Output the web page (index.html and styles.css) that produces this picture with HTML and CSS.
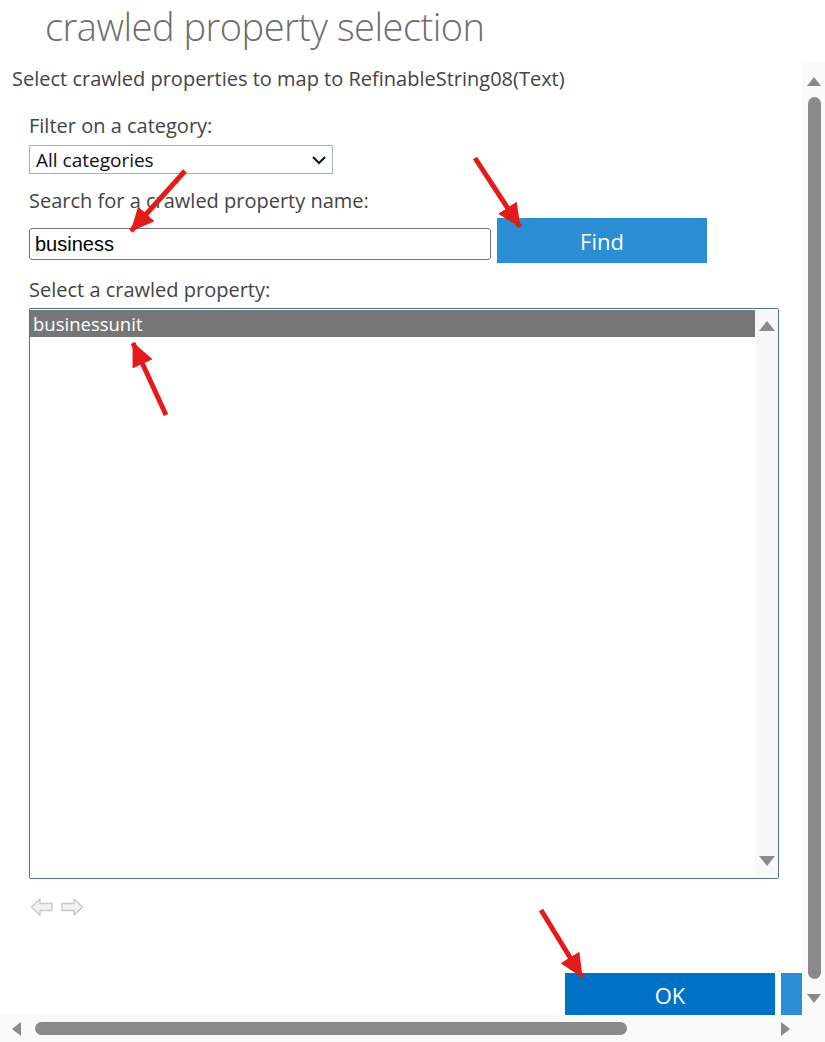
FILE: index.html
```html
<!DOCTYPE html>
<html>
<head>
<meta charset="utf-8">
<link rel="stylesheet" href="styles.css">
</head>
<body>
<div class="window">
  <div class="header">
    <h1 class="title">crawled property selection</h1>
  </div>
  <div class="main">
    <div class="content">
      <p class="desc">Select crawled properties to map to RefinableString08(Text)</p>
      <div class="form">
        <div class="label label-filter">Filter on a category:</div>
        <div class="select">
          <span>All categories</span>
          <svg class="chev" width="16" height="10" viewBox="0 0 16 10"><path d="M2 2 L8 8 L14 2" fill="none" stroke="#111" stroke-width="2"/></svg>
        </div>
        <div class="label label-search">Search for a crawled property name:</div>
        <div class="search-row">
          <div class="input">business</div>
          <div class="btn-find">Find</div>
        </div>
        <div class="label label-select">Select a crawled property:</div>
        <div class="listbox">
          <div class="list">
            <div class="item selected">businessunit</div>
          </div>
          <div class="list-scroll">
            <svg width="18" height="12" viewBox="0 0 18 12"><path d="M1 11 L9 1 L17 11 Z" fill="#8a8a8a"/></svg>
            <svg width="18" height="12" viewBox="0 0 18 12"><path d="M1 1 L9 11 L17 1 Z" fill="#8a8a8a"/></svg>
          </div>
        </div>
        <div class="nav">
          <svg width="24" height="20" viewBox="0 0 24 20"><path d="M1.5 10 L10 2 L10 6.5 L22 6.5 L22 13.5 L10 13.5 L10 18 Z" fill="#f2f2f2" stroke="#c8c8c8" stroke-width="1.3" stroke-linejoin="round"/></svg>
          <svg width="24" height="20" viewBox="0 0 24 20"><path d="M22.5 10 L14 2 L14 6.5 L2 6.5 L2 13.5 L14 13.5 L14 18 Z" fill="#f2f2f2" stroke="#c8c8c8" stroke-width="1.3" stroke-linejoin="round"/></svg>
        </div>
      </div>
      <div class="actions">
        <div class="btn-ok">OK</div>
        <div class="btn-cancel"></div>
      </div>
    </div>
    <div class="vscroll">
      <svg class="vs-up" width="16" height="11" viewBox="0 0 16 11"><path d="M1 10 L8 1 L15 10 Z" fill="#8a8a8a"/></svg>
      <div class="vs-thumb"></div>
      <svg class="vs-down" width="16" height="11" viewBox="0 0 16 11"><path d="M1 1 L8 10 L15 1 Z" fill="#8a8a8a"/></svg>
    </div>
  </div>
  <div class="hscroll">
    <svg class="hs-left" width="11" height="16" viewBox="0 0 11 16"><path d="M10 1 L1 8 L10 15 Z" fill="#8a8a8a"/></svg>
    <div class="hs-track"><div class="hs-thumb"></div></div>
    <svg class="hs-right" width="11" height="16" viewBox="0 0 11 16"><path d="M1 1 L10 8 L1 15 Z" fill="#8a8a8a"/></svg>
    <div class="hs-corner"></div>
  </div>

  <svg class="annot" width="825" height="1042" viewBox="0 0 825 1042">
    <defs>
      <marker id="ah" viewBox="0 0 24 22" markerWidth="24" markerHeight="22" refX="23" refY="11" orient="auto" markerUnits="userSpaceOnUse">
        <path d="M0 0 L24 11 L0 22 Z" fill="#e31b1b"/>
      </marker>
    </defs>
    <line x1="185" y1="171" x2="131" y2="231" stroke="#e31b1b" stroke-width="5" marker-end="url(#ah)"/>
    <line x1="475" y1="158" x2="520" y2="227" stroke="#e31b1b" stroke-width="5" marker-end="url(#ah)"/>
    <line x1="166" y1="415" x2="133" y2="343" stroke="#e31b1b" stroke-width="5" marker-end="url(#ah)"/>
    <line x1="541" y1="910" x2="582" y2="977" stroke="#e31b1b" stroke-width="5" marker-end="url(#ah)"/>
  </svg>
</div>
</body>
</html>
```

FILE: styles.css
```css
* { box-sizing: border-box; }
html, body { margin: 0; padding: 0; background: #fff; }
body { overflow: hidden; font-family: "Open Sans", "Noto Sans", sans-serif; }

.window {
  position: relative;
  width: 825px;
  height: 1042px;
  display: flex;
  flex-direction: column;
  overflow: hidden;
}

.header { height: 63px; flex: none; padding-left: 45px; }
.title {
  margin: 0;
  font-family: "Open Sans", sans-serif;
  font-weight: 300;
  font-size: 38px;
  line-height: 52px;
  color: #6e6e6e;
  letter-spacing: -0.5px;
  white-space: nowrap;
}

.main { flex: 1; display: flex; min-height: 0; }
.content {
  flex: 1;
  min-width: 0;
  overflow: hidden;
  display: flex;
  flex-direction: column;
}

.desc {
  margin: 4px 0 0 12px;
  font-size: 20px;
  line-height: 24px;
  color: #444;
  white-space: nowrap;
}

.form { padding-left: 29px; }
.label {
  font-size: 20px;
  line-height: 22px;
  color: #444;
  white-space: nowrap;
}
.label-filter { margin-top: 24px; }
.label-search { margin-top: 16px; }
.label-select { margin-top: 16px; }

.select {
  margin-top: 8px;
  width: 304px;
  height: 29px;
  border: 1px solid #a6b4c2;
  display: flex;
  align-items: center;
  justify-content: space-between;
  padding: 0 5px 0 6px;
  font-size: 19px;
  color: #111;
}

.search-row { display: flex; margin-top: 6px; }
.input {
  margin-top: 10px;
  width: 462px;
  height: 32px;
  border: 1px solid #767676;
  border-radius: 3px;
  padding-left: 5px;
  font-family: "Liberation Sans", Arial, sans-serif;
  font-size: 20px;
  line-height: 30px;
  color: #000;
}
.btn-find {
  margin-left: 6px;
  width: 210px;
  height: 45px;
  background: #2b8dd4;
  color: #fff;
  font-size: 22px;
  display: flex;
  align-items: center;
  justify-content: center;
}

.listbox {
  margin-top: 7px;
  width: 750px;
  height: 571px;
  border: 1px solid #4e7290;
  border-radius: 2px;
  display: flex;
}
.list { flex: 1; padding-top: 1px; }
.item {
  height: 27px;
  padding-left: 3px;
  font-size: 18.5px;
  line-height: 27px;
}
.selected { background: #767676; color: #fff; }
.list-scroll {
  width: 23px;
  background: #f8f8f8;
  display: flex;
  flex-direction: column;
  justify-content: space-between;
  align-items: center;
  padding: 11px 0 11px;
}

.nav { display: flex; gap: 6px; margin-top: 18px; padding-left: 1px; }

.actions {
  display: flex;
  gap: 6px;
  margin-top: 56px;
  padding-left: 565px;
}
.btn-ok {
  flex: none;
  width: 210px;
  height: 43px;
  background: #0072c6;
  color: #fff;
  font-size: 22px;
  display: flex;
  align-items: center;
  justify-content: center;
}
.btn-cancel { flex: none; width: 210px; height: 43px; background: #2b8dd4; }

.vscroll {
  width: 23px;
  flex: none;
  background: #f9f9f9;
  display: flex;
  flex-direction: column;
  align-items: center;
  padding-top: 13px;
}
.vs-up { flex: none; }
.vs-thumb {
  width: 13px;
  height: 882px;
  margin-top: 10px;
  margin-left: 1px;
  background: #8a8a8a;
  border-radius: 7px;
}
.vs-down { flex: none; margin-top: 14px; }

.hscroll {
  height: 27px;
  flex: none;
  background: #f9f9f9;
  display: flex;
  align-items: center;
}
.hs-left { margin-left: 11px; flex: none; }
.hs-track { width: 757px; padding-left: 13px; flex: none; }
.hs-thumb { width: 592px; height: 13px; background: #8a8a8a; border-radius: 7px; }
.hs-right { flex: none; margin-left: 1px; }
.hs-corner { flex: 1; }

.annot { position: absolute; left: 0; top: 0; pointer-events: none; }
```
